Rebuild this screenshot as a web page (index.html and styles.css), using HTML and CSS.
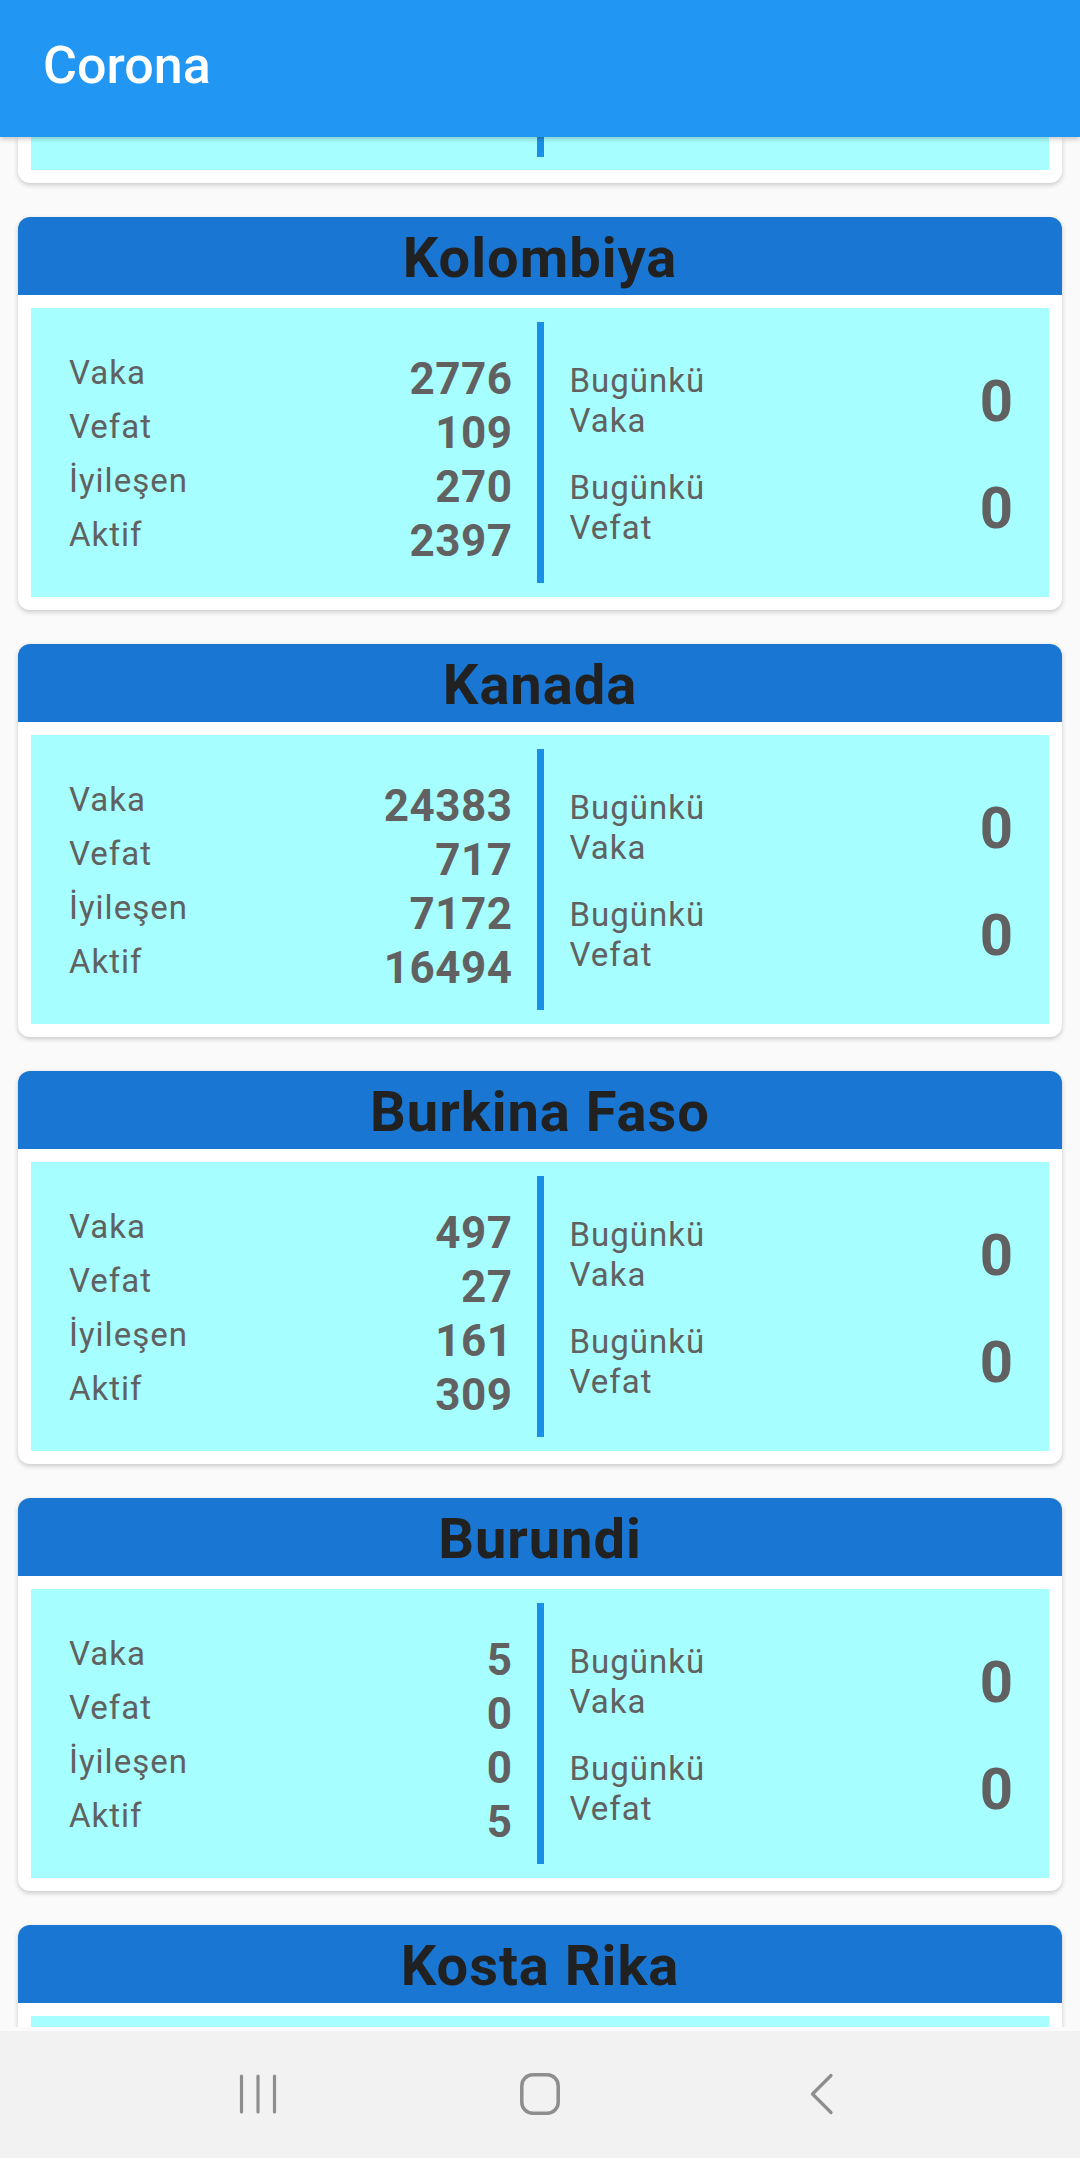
FILE: index.html
```html
<!DOCTYPE html>
<html lang="tr">
<head>
<meta charset="utf-8">
<title>Corona</title>
<link rel="stylesheet" href="styles.css">
</head>
<body>
<header class="appbar"><h1 class="appbar-title">Corona</h1></header>
<main class="list">
  <div class="card card-stub">
    <div class="stats stats-stub"><div class="totals"></div><div class="divider"></div><div class="today"></div></div>
  </div>

  <section class="card">
    <h2 class="card-title">Kolombiya</h2>
    <div class="stats">
      <div class="totals">
        <div class="row"><span class="label">Vaka</span><span class="num">2776</span></div>
        <div class="row"><span class="label">Vefat</span><span class="num">109</span></div>
        <div class="row"><span class="label">İyileşen</span><span class="num">270</span></div>
        <div class="row"><span class="label">Aktif</span><span class="num">2397</span></div>
      </div>
      <div class="divider"></div>
      <div class="today">
        <div class="trow"><span class="tlabel">Bugünkü<br>Vaka</span><span class="tnum">0</span></div>
        <div class="trow"><span class="tlabel">Bugünkü<br>Vefat</span><span class="tnum">0</span></div>
      </div>
    </div>
  </section>

  <section class="card">
    <h2 class="card-title">Kanada</h2>
    <div class="stats">
      <div class="totals">
        <div class="row"><span class="label">Vaka</span><span class="num">24383</span></div>
        <div class="row"><span class="label">Vefat</span><span class="num">717</span></div>
        <div class="row"><span class="label">İyileşen</span><span class="num">7172</span></div>
        <div class="row"><span class="label">Aktif</span><span class="num">16494</span></div>
      </div>
      <div class="divider"></div>
      <div class="today">
        <div class="trow"><span class="tlabel">Bugünkü<br>Vaka</span><span class="tnum">0</span></div>
        <div class="trow"><span class="tlabel">Bugünkü<br>Vefat</span><span class="tnum">0</span></div>
      </div>
    </div>
  </section>

  <section class="card">
    <h2 class="card-title">Burkina Faso</h2>
    <div class="stats">
      <div class="totals">
        <div class="row"><span class="label">Vaka</span><span class="num">497</span></div>
        <div class="row"><span class="label">Vefat</span><span class="num">27</span></div>
        <div class="row"><span class="label">İyileşen</span><span class="num">161</span></div>
        <div class="row"><span class="label">Aktif</span><span class="num">309</span></div>
      </div>
      <div class="divider"></div>
      <div class="today">
        <div class="trow"><span class="tlabel">Bugünkü<br>Vaka</span><span class="tnum">0</span></div>
        <div class="trow"><span class="tlabel">Bugünkü<br>Vefat</span><span class="tnum">0</span></div>
      </div>
    </div>
  </section>

  <section class="card">
    <h2 class="card-title">Burundi</h2>
    <div class="stats">
      <div class="totals">
        <div class="row"><span class="label">Vaka</span><span class="num">5</span></div>
        <div class="row"><span class="label">Vefat</span><span class="num">0</span></div>
        <div class="row"><span class="label">İyileşen</span><span class="num">0</span></div>
        <div class="row"><span class="label">Aktif</span><span class="num">5</span></div>
      </div>
      <div class="divider"></div>
      <div class="today">
        <div class="trow"><span class="tlabel">Bugünkü<br>Vaka</span><span class="tnum">0</span></div>
        <div class="trow"><span class="tlabel">Bugünkü<br>Vefat</span><span class="tnum">0</span></div>
      </div>
    </div>
  </section>

  <section class="card">
    <h2 class="card-title">Kosta Rika</h2>
    <div class="stats">
      <div class="totals"></div>
      <div class="divider"></div>
      <div class="today"></div>
    </div>
  </section>
</main>
<nav class="navbar">
  <div class="navbtn">
    <svg width="40" height="42" viewBox="0 0 40 42"><g stroke="#8e8e8e" stroke-width="3.2" stroke-linecap="round"><line x1="3.5" y1="3" x2="3.5" y2="39"/><line x1="20" y1="3" x2="20" y2="39"/><line x1="36.5" y1="3" x2="36.5" y2="39"/></g></svg>
  </div>
  <div class="navbtn">
    <svg width="42" height="44" viewBox="0 0 42 44"><rect x="2.8" y="2.8" width="36.4" height="38.4" rx="11" ry="11" fill="none" stroke="#8e8e8e" stroke-width="3.5"/></svg>
  </div>
  <div class="navbtn">
    <svg width="26" height="42" viewBox="0 0 26 42"><polyline points="22,2.5 3.5,21 22,39.5" fill="none" stroke="#8e8e8e" stroke-width="3.2" stroke-linecap="round" stroke-linejoin="round"/></svg>
  </div>
</nav>
</body>
</html>
```

FILE: styles.css
```css
* { box-sizing: border-box; }
html, body {
  margin: 0;
  padding: 0;
}
body {
  width: 1080px;
  height: 2158px;
  overflow: hidden;
  background: #fafafa;
  font-family: Roboto, "Noto Sans", "Liberation Sans", sans-serif;
  display: flex;
  flex-direction: column;
}
.appbar {
  position: relative;
  z-index: 2;
  height: 137px;
  flex: none;
  background: #2196f3;
  box-shadow: 0 2px 5px rgba(0, 0, 0, 0.22);
  padding-left: 43px;
}
.appbar-title {
  margin: 0;
  color: #ffffff;
  font-size: 52px;
  font-weight: 500;
  line-height: 131px;
}
.list {
  height: 1890px;
  flex: none;
  overflow: hidden;
  display: flex;
  flex-direction: column;
  gap: 34px;
}
.card {
  flex: none;
  margin: 0 18px;
  background: #ffffff;
  border-radius: 12px;
  box-shadow: 0 2px 5px rgba(0, 0, 0, 0.2);
}
.card-stub {
  border-radius: 0 0 12px 12px;
  padding: 0 13px 13px;
}
.card-title {
  margin: 0;
  height: 78px;
  padding-top: 4px;
  background: #1976d2;
  border-radius: 12px 12px 0 0;
  color: #212121;
  font-size: 56px;
  font-weight: 700;
  letter-spacing: 1px;
  line-height: 74px;
  text-align: center;
}
.stats {
  display: flex;
  margin: 13px;
  height: 289px;
  padding: 14px 0;
  background: #a6fffe;
}
.stats-stub {
  margin: 0;
  height: 33px;
  padding: 0 0 13px;
}
.divider {
  flex: none;
  width: 7px;
  background: #1a8fe8;
}
.totals {
  flex: 1;
  padding: 30px 24px 0 38px;
}
.row {
  display: flex;
  justify-content: space-between;
  align-items: flex-start;
  height: 54px;
}
.label {
  color: #616161;
  font-size: 33px;
  letter-spacing: 1px;
  line-height: 42px;
}
.num {
  color: #616161;
  font-size: 44px;
  font-weight: 700;
  letter-spacing: 0.5px;
  line-height: 54px;
}
.today {
  flex: 1;
  padding: 25px 36px 0 26px;
}
.trow {
  display: flex;
  justify-content: space-between;
  align-items: center;
  height: 107px;
}
.tlabel {
  color: #616161;
  font-size: 33px;
  letter-spacing: 1px;
  line-height: 40px;
}
.tnum {
  color: #616161;
  font-size: 58px;
  font-weight: 700;
  line-height: 68px;
}
.navbar {
  margin-top: 4px;
  flex: 1;
  background: #f2f2f2;
  display: flex;
  justify-content: center;
  align-items: center;
  padding-bottom: 2px;
}
.navbtn {
  width: 282px;
  display: flex;
  justify-content: center;
  align-items: center;
}
.navbtn svg { display: block; }
```
